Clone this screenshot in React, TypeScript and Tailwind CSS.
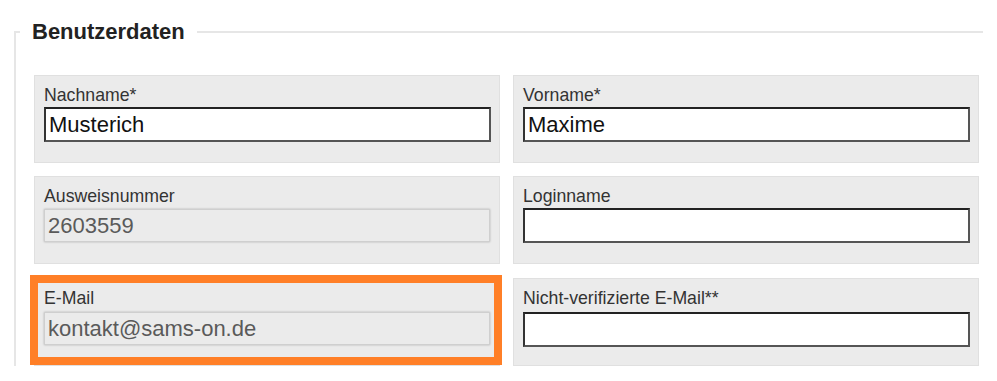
import React from "react";

type Field = {
  label: string;
  value: string;
  disabled?: boolean;
  highlight?: boolean;
};

const rows: Field[][] = [
  [
    { label: "Nachname*", value: "Musterich" },
    { label: "Vorname*", value: "Maxime" },
  ],
  [
    { label: "Ausweisnummer", value: "2603559", disabled: true },
    { label: "Loginname", value: "" },
  ],
  [
    { label: "E-Mail", value: "kontakt@sams-on.de", disabled: true, highlight: true },
    { label: "Nicht-verifizierte E-Mail**", value: "" },
  ],
];

function FieldBox({ f, last }: { f: Field; last: boolean }) {
  return (
    <div className="relative h-[88px] border border-[#e0e0e0] bg-[#ebebeb] px-[9px] pt-[9px]">
      <label className="block h-[20px] text-[17.7px] leading-[20px] text-[#333]">{f.label}</label>
      {f.disabled ? (
        <input
          disabled
          value={f.value}
          className={`${last ? "mt-[4px]" : "mt-[3px]"} block h-[33px] w-[446px] border border-[#cfcfcf] bg-[#ebebeb] pl-[3px] text-[22px] text-[#5a5a5a] shadow-[0_0_2px_rgba(0,0,0,0.25)] outline-none`}
        />
      ) : (
        <input
          readOnly
          value={f.value}
          className={`${last ? "mt-[4px]" : "mt-[2px]"} block h-[35px] w-[447px] border-2 border-[#555] border-t-[#222] border-l-[#333] bg-white px-[3px] text-[22px] text-[#111] outline-none`}
        />
      )}
      {f.highlight && (
        <div className="pointer-events-none absolute left-[-5px] top-[-4px] h-[90px] w-[472px] border-[8px] border-[#ff7f27]" />
      )}
    </div>
  );
}

export default function App() {
  return (
    <div className="h-[381px] w-[997px] overflow-hidden bg-white pt-[19px] font-['Liberation_Sans',Arial,sans-serif]">
      <fieldset className="ml-[14px] w-[969px] border-2 border-b-0 border-r-0 border-[#e6e6e6] pl-[4px]">
        <legend className="px-[12px] text-[22px] font-bold leading-[25px] text-[#222]">Benutzerdaten</legend>
        <div className="ml-[14px] mt-[31px] flex w-[945px] flex-col">
          {rows.map((row, i) => (
            <div
              key={i}
              className={`grid grid-cols-2 gap-[13px] ${i === 1 ? "mt-[13px]" : ""} ${i === 2 ? "mt-[14px]" : ""}`}
            >
              {row.map((f) => (
                <FieldBox key={f.label} f={f} last={i === 2} />
              ))}
            </div>
          ))}
        </div>
      </fieldset>
    </div>
  );
}
